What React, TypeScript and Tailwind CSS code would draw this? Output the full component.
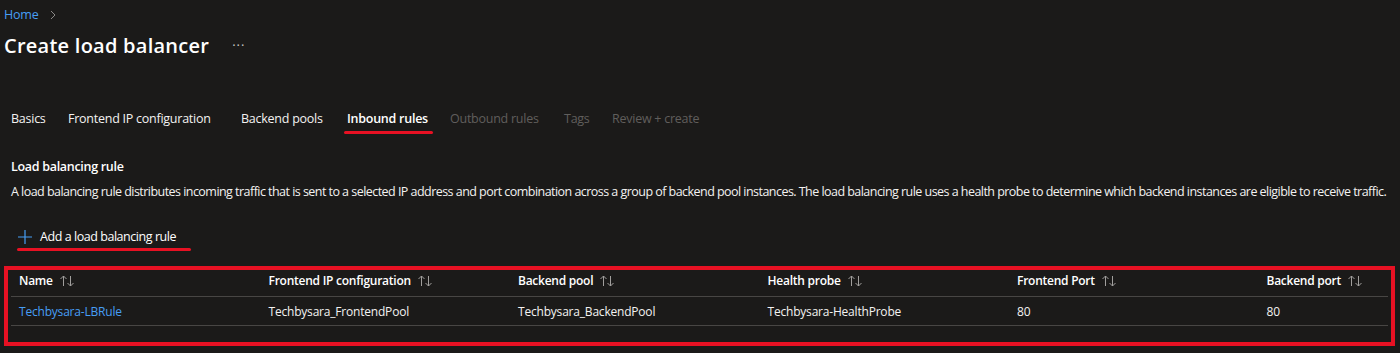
import React from "react";

const SortIcon = () => (
  <svg width="16" height="14" viewBox="0 0 16 14" fill="none" stroke="#a19f9d" strokeWidth="1" className="ml-[6px] inline-block">
    <path d="M4.5 12V2M1.5 5l3-3 3 3" />
    <path d="M11.5 2v10M8.5 9l3 3 3-3" />
  </svg>
);

const cols = [
  "Name",
  "Frontend IP configuration",
  "Backend pool",
  "Health probe",
  "Frontend Port",
  "Backend port",
];

const row = [
  "Techbysara-LBRule",
  "Techbysara_FrontendPool",
  "Techbysara_BackendPool",
  "Techbysara-HealthProbe",
  "80",
  "80",
];

export default function App() {
  const tabs = [
    { t: "Basics", s: "on", w: "w-[57px]" },
    { t: "Frontend IP configuration", s: "on", w: "w-[173px]" },
    { t: "Backend pools", s: "on", w: "w-[106px]" },
    { t: "Inbound rules", s: "active", w: "w-[103px]" },
    { t: "Outbound rules", s: "off", w: "w-[114px]" },
    { t: "Tags", s: "off", w: "w-[48px]" },
    { t: "Review + create", s: "off", w: "w-[120px]" },
  ];
  return (
    <div
      className="w-[1400px] h-[353px] bg-[#1b1a19] text-[#f3f2f1] overflow-hidden"
      style={{ fontFamily: '"Open Sans", "Noto Sans", sans-serif' }}
    >
      <div className="pl-[4px] pt-[5px] flex items-center h-[25px] text-[12.5px] leading-[20px]">
        <span className="text-[#479ef5] tracking-[-0.2px]">Home</span>
        <svg width="12" height="12" viewBox="0 0 12 12" className="ml-[8px]" fill="none" stroke="#8a8886" strokeWidth="1">
          <path d="M4 2l4 4-4 4" />
        </svg>
      </div>
      <div className="pl-[4px] flex items-center h-[32px] mt-[5px]">
        <h1 className="text-[20px] font-semibold text-white tracking-[0.25px]">Create load balancer</h1>
        <span className="ml-[23px] text-[#c8c6c4] text-[13px] tracking-[1px]">···</span>
      </div>
      <div className="flex pl-[11px] mt-[45px] h-[24px] items-center text-[12.5px]">
        {tabs.map((tab) => (
          <div key={tab.t} className={"relative shrink-0 " + tab.w}>
            <span
              className={
                "relative tracking-[-0.25px] " +
                (tab.s === "active"
                  ? "font-semibold text-white"
                  : tab.s === "on"
                  ? "text-[#f3f2f1]"
                  : "text-[#605e5c]")
              }
            >
              {tab.t}
              {tab.s === "active" && (
                <span className="absolute left-[-3px] right-[-5px] top-[21px] h-[3px] rounded-full bg-[#e81123]" />
              )}
            </span>
          </div>
        ))}
      </div>
      <div className="pl-[11px] mt-[26px] text-[12.5px] font-semibold text-white leading-[20px] tracking-[-0.3px]">
        Load balancing rule
      </div>
      <div className="pl-[11px] mt-[5px] text-[12.5px] leading-[20px] tracking-[-0.54px] whitespace-nowrap">
        A load balancing rule distributes incoming traffic that is sent to a selected IP address and port combination across a group of backend pool instances. The load balancing rule uses a health probe to determine which backend instances are eligible to receive traffic.
      </div>
      <div className="pl-[18px] mt-[25px] flex items-center h-[20px] relative w-fit">
        <svg width="14" height="14" viewBox="0 0 14 14" fill="none" stroke="#479ef5" strokeWidth="1.2">
          <path d="M7 0v14M0 7h14" />
        </svg>
        <span className="ml-[8px] text-[12.5px] text-white tracking-[-0.45px]">Add a load balancing rule</span>
        <div className="absolute left-[17px] right-[-15px] top-[21px] h-[3px] rounded-full bg-[#e81123]" />
      </div>
      <div className="ml-[4px] mt-[19px] w-[1391px] h-[80px] border-[4px] border-[#e81123] px-[3px]">
        <div className="grid grid-cols-[249.5px_249.5px_249.5px_249.5px_249.5px_1fr] border-b border-[#484644] h-[27px] pt-[2px] items-start text-[12px] leading-[18px] font-semibold text-white">
          {cols.map((c) => (
            <div key={c} className="pl-[8px] flex items-center tracking-[-0.25px]">
              {c}
              <SortIcon />
            </div>
          ))}
        </div>
        <div className="grid grid-cols-[249.5px_249.5px_249.5px_249.5px_249.5px_1fr] border-b border-[#484644] h-[29px] pt-[1px] items-center text-[12px]">
          {row.map((c, i) => (
            <div key={i} className={"pl-[8px] tracking-[-0.2px] " + (i === 0 ? "text-[#479ef5]" : "text-[#f3f2f1]")}>
              {c}
            </div>
          ))}
        </div>
      </div>
    </div>
  );
}
